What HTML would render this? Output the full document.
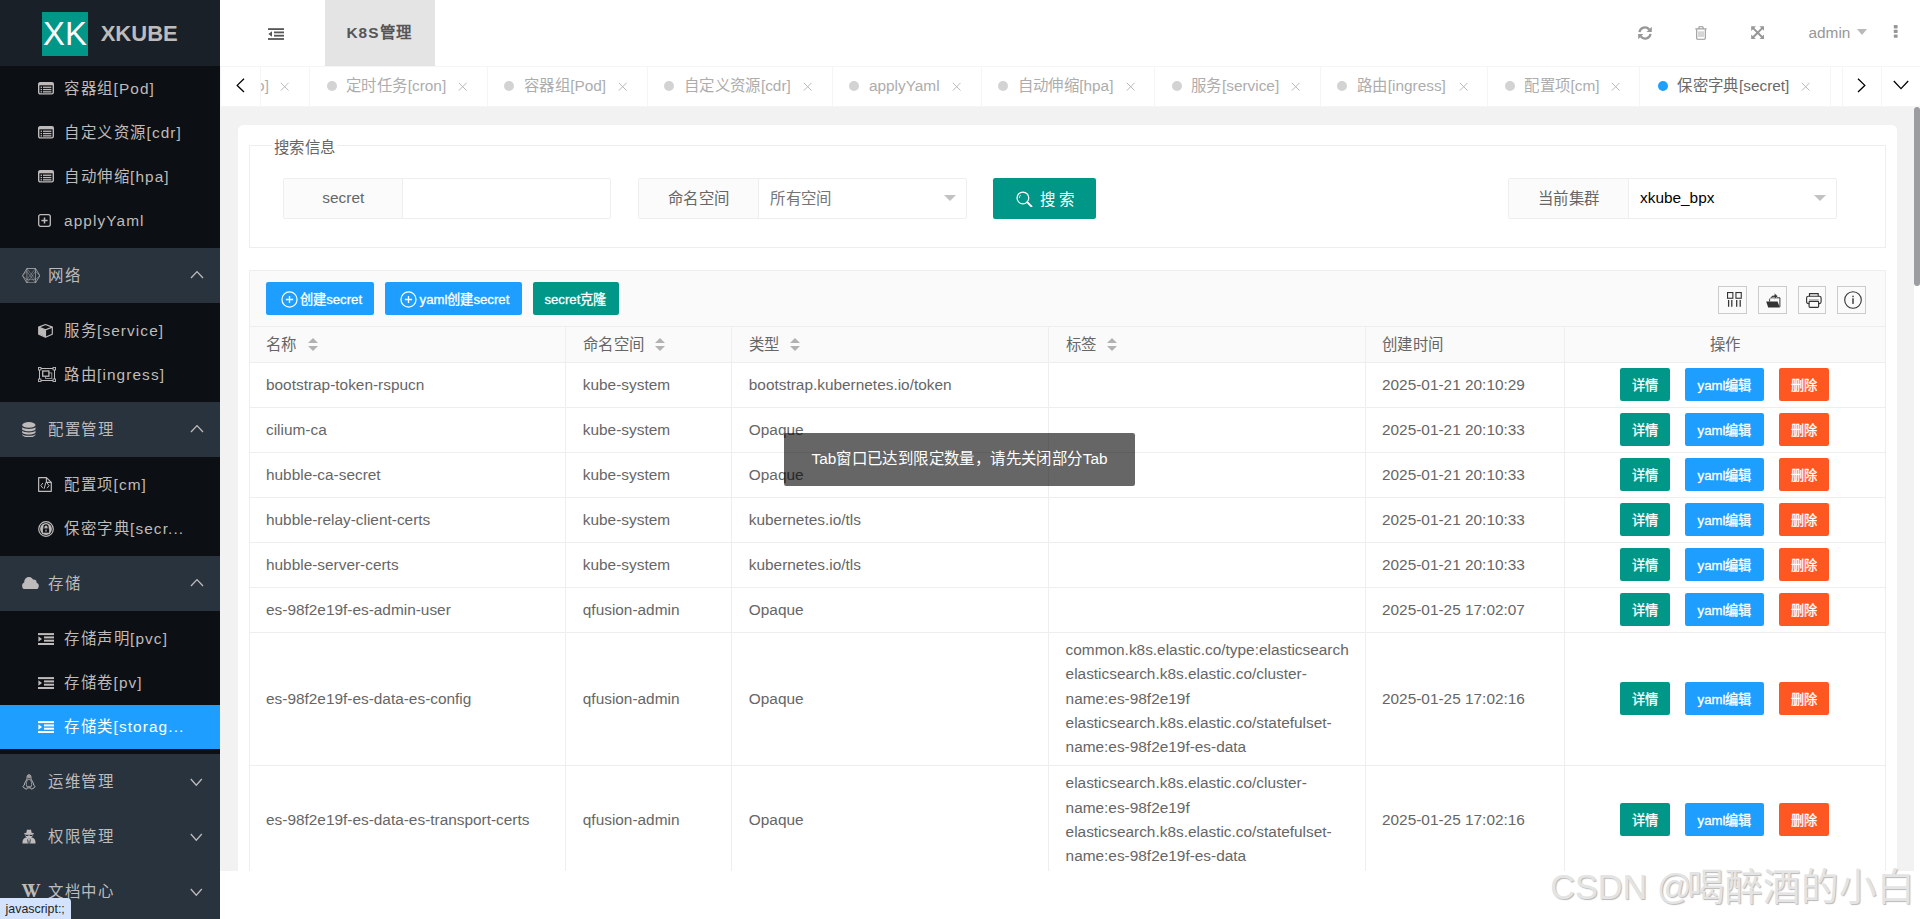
<!DOCTYPE html>
<html lang="zh-CN">
<head>
<meta charset="utf-8">
<title>XKUBE</title>
<style>
*{box-sizing:border-box;margin:0;padding:0}
html,body{width:1920px;height:919px;overflow:hidden;background:#fff}
body{position:relative;font-family:"Liberation Sans",sans-serif;font-size:15.4px;color:#666;line-height:1}
i{font-style:normal}
svg{display:block}
/* ---------- side ---------- */
#side{position:absolute;left:0;top:0;width:220px;height:919px;background:#28333E;overflow:hidden;color:rgb(191,187,187)}
#logo{position:absolute;left:0;top:0;width:220px;height:66px;background:#192027;z-index:3}
#logo .lg{position:absolute;left:42px;top:12px;width:46px;height:44px;background:#009688;color:#fff;font-size:32.8px;line-height:44px;overflow:hidden}
#logo .lg span{position:absolute;left:1px;top:0.3px;letter-spacing:0}
#logo h1{position:absolute;left:100.7px;top:0.6px;height:66px;line-height:66px;font-size:22px;font-weight:bold;color:rgb(191,187,187)}
.child{position:absolute;left:0;width:220px;background:#0c0f13}
.mi{position:absolute;left:0;width:220px;height:44px;line-height:44px;color:rgb(191,187,187)}
.mi i{position:absolute;top:0;height:44px;display:flex;align-items:center}
.mi>span{position:absolute;left:64px;top:0.8px;white-space:nowrap;letter-spacing:1.1px;font-size:15.4px}
.mi.on{background:#1E9FFF;color:#fff}
.gh{position:absolute;left:0;width:220px;height:55px;line-height:55px;color:rgb(191,187,187)}
.gh i{position:absolute;top:0;height:55px;display:flex;align-items:center}
.gh>span{position:absolute;left:48px;top:0;white-space:nowrap;letter-spacing:1.1px}
.gh .chev{position:absolute;left:190px;top:22px}
.wiki{font-family:"Liberation Serif",serif;font-weight:bold;font-size:18.4px;letter-spacing:-7.4px;position:relative;top:0.4px;left:-0.6px}
/* ---------- header ---------- */
#header{position:absolute;left:220px;top:0;width:1700px;height:66px;background:#fff}
#header .tg{position:absolute;left:48px;top:27.5px;color:#565656}
#header .k8s{position:absolute;left:105px;top:0;width:110px;height:66px;background:#e4e4e4;color:#565656;font-weight:bold;letter-spacing:1.1px;line-height:66px;text-align:center;white-space:nowrap;padding-right:1px}
#header .hi{position:absolute;color:#979797}
#header .admin{position:absolute;left:1588.5px;top:0;line-height:66px;color:#979797}
/* ---------- tabs ---------- */
#tabs{position:absolute;left:220px;top:66px;width:1700px;height:40.7px;background:#fff;border-top:1px solid #f5f5f5;border-bottom:1px solid #f5f5f5;overflow:hidden}
.tab{position:absolute;top:0;height:38.7px;line-height:38.5px;border-right:1px solid #f5f5f5;color:#adadad;white-space:nowrap;overflow:hidden}
.tab .dot{position:absolute;left:16.3px;top:14.4px;width:10px;height:10px;border-radius:50%;background:#d3d3d3}
.tab .tt{position:absolute;top:0}
.tab .tx{position:absolute;top:15.3px;color:#b9b9b9}
.tab.act{color:#696969}
.tab.act .dot{background:#1e9fff}
.ctl{position:absolute;top:0;height:38.7px;background:#fff;color:#000}
/* ---------- content ---------- */
#content{position:absolute;left:220px;top:106.7px;width:1700px;height:764px;background:#f2f2f2;overflow:hidden}
#sb{position:absolute;left:1694px;top:0;width:6px;height:764px;background:#fff}
#sb b{position:absolute;left:0;top:0.3px;width:6px;height:179.5px;border-radius:3px;background:#9c9da0}
#main{position:absolute;left:18px;top:18.3px;width:1659px;height:900px;background:#fff;border-radius:5.5px}
#fs{position:absolute;left:11.4px;top:20.2px;width:1636.4px;height:102.6px;border:1px solid #eee}
#fs legend,#lg{position:absolute;left:21.4px;top:-7.2px;height:18px;line-height:18px;background:#fff;padding:0 2.2px;width:65px;color:#666;white-space:nowrap}
.grp{position:absolute;top:53.2px;height:40.7px;border:1px solid #eee;border-radius:2px;background:#fff}
.grp .lb{position:absolute;left:0;top:0;height:38.7px;line-height:38.2px;background:#FBFBFB;border-right:1px solid #eee;text-align:center;color:#666;white-space:nowrap}
.grp .val{position:absolute;top:0;height:38.7px;line-height:38.2px;white-space:nowrap}
.grp .car{position:absolute;top:15.9px;width:0;height:0;border:6px solid transparent;border-top-color:#c2c2c2;border-bottom-width:0;border-top-width:6.4px}
#sbtn{position:absolute;left:755px;top:52.8px;width:103px;height:41.2px;background:#009688;border-radius:2.2px;color:#fff;line-height:41.2px;white-space:nowrap}
.cj{position:relative;top:0.7px}
.z{letter-spacing:.4px}
.mi .z,.gh .z{letter-spacing:1.5px}
#header .k8s .z{letter-spacing:1.5px}
/* table */
#tbl{position:absolute;left:11.4px;top:144.9px;width:1637px;height:800px;border:1px solid #eee}
#tool{position:absolute;left:11.4px;top:144.9px;width:1637px;height:57.3px;background:#FAFAFA;border:1px solid #eee}
.tbtn{position:absolute;top:157px;height:33px;border-radius:2.2px;color:#fff;font-size:13.2px;line-height:33px;white-space:nowrap}
.tbtn .ic{position:absolute;top:9.2px}
.tbtn .tx{position:absolute;top:0.9px;-webkit-text-stroke:0.3px #fff}
.tl{position:absolute;top:161px;width:29px;height:28px;border:1px solid #ccc;color:#333;background:#FAFAFA}
.tl svg{position:absolute}
#thead{position:absolute;left:0;top:201px;width:1659px;height:37px}
.th{position:absolute;top:0;height:37px;line-height:37px;background:#FAFAFA;border-bottom:1px solid #eee;border-right:1px solid #eee;border-top:1px solid #eee;padding-left:16px;white-space:nowrap;color:#666}
.th.ctr{text-align:center;padding-left:0}
.th .t{display:inline-block;vertical-align:top;line-height:35px}
.sort{display:inline-block;position:relative;width:10px;height:14px;margin-left:10.8px;vertical-align:top;top:11.5px}
.sort i{position:absolute;left:0;width:0;height:0;border:5px solid transparent}
.sort .u{top:-5.3px;border-bottom-color:#b2b2b2;border-bottom-width:5.5px}
.sort .d{top:7.3px;border-top-color:#b2b2b2;border-top-width:5.5px}
.tr{position:absolute;left:0;width:1659px}
.td{position:absolute;top:0;height:100%;border-bottom:1px solid #eee;border-right:1px solid #eee;padding-left:16px;display:flex;align-items:center;white-space:nowrap;color:#666}
.td .c{line-height:24.2px;position:relative;top:0.4px}
.td.last{padding-left:0}
.td.lab{padding-left:16.6px}
.td.lab .c{top:-0.4px}
.ops{position:absolute;left:0;top:5.5px;height:33px;width:100%}
.td.last{display:block}
.td.last .ops{top:50%;margin-top:-17px}
.b{position:absolute;top:0;height:33px;line-height:35.4px;-webkit-text-stroke:0.3px #fff;border-radius:2.2px;color:#fff;font-size:13.2px;text-align:center;white-space:nowrap}
.b.g{background:#009688}.b.bl{background:#1E9FFF}.b.r{background:#FF5722}
/* toast */
#toast{position:absolute;left:784px;top:433.3px;width:351px;height:52.4px;background:rgba(0,0,0,.6);border-radius:2.2px;color:#fff;line-height:52.4px;text-align:center;white-space:nowrap;z-index:10}
/* status + watermark */
#status{position:absolute;left:0;top:898px;width:71.3px;height:21px;background:#d3e3fd;border-top-right-radius:4px;color:#1f1f1f;font-size:12.4px;line-height:22.6px;padding-left:5.6px;z-index:20}
#wm{position:absolute;left:1550.2px;top:866.3px;font-size:34.3px;line-height:40px;color:#e4e4e4;white-space:nowrap;text-shadow:1px 1px 1px #b8b8b8,-0.5px -0.5px 0 #fff;z-index:15;letter-spacing:0}
</style>
</head>
<body>
<div id="side">
<div id="logo"><div class="lg"><span>XK</span></div><h1>XKUBE</h1></div>
<div class="child" style="top:66px;height:182px"></div>
<div class="mi " style="top:66.5px"><i style="left:38px"><svg width="16" height="13" viewBox="0 0 16 13" ><rect x="0.7" y="0.7" width="14.6" height="11.2" rx="1.6" fill="none" stroke="currentColor" stroke-width="1.4"/><rect x="0.7" y="0.7" width="14.6" height="2.6" fill="currentColor"/><rect x="2.6" y="4.6" width="1.4" height="1.3" fill="currentColor"/><rect x="5" y="4.6" width="8.4" height="1.3" fill="currentColor"/><rect x="2.6" y="6.9" width="1.4" height="1.3" fill="currentColor"/><rect x="5" y="6.9" width="8.4" height="1.3" fill="currentColor"/><rect x="2.6" y="9.2" width="1.4" height="1.3" fill="currentColor"/><rect x="5" y="9.2" width="8.4" height="1.3" fill="currentColor"/></svg></i><span><span class="z">容器组</span>[Pod]</span></div>
<div class="mi " style="top:110.5px"><i style="left:38px"><svg width="16" height="13" viewBox="0 0 16 13" ><rect x="0.7" y="0.7" width="14.6" height="11.2" rx="1.6" fill="none" stroke="currentColor" stroke-width="1.4"/><rect x="0.7" y="0.7" width="14.6" height="2.6" fill="currentColor"/><rect x="2.6" y="4.6" width="1.4" height="1.3" fill="currentColor"/><rect x="5" y="4.6" width="8.4" height="1.3" fill="currentColor"/><rect x="2.6" y="6.9" width="1.4" height="1.3" fill="currentColor"/><rect x="5" y="6.9" width="8.4" height="1.3" fill="currentColor"/><rect x="2.6" y="9.2" width="1.4" height="1.3" fill="currentColor"/><rect x="5" y="9.2" width="8.4" height="1.3" fill="currentColor"/></svg></i><span><span class="z">自定义资源</span>[cdr]</span></div>
<div class="mi " style="top:154.5px"><i style="left:38px"><svg width="16" height="13" viewBox="0 0 16 13" ><rect x="0.7" y="0.7" width="14.6" height="11.2" rx="1.6" fill="none" stroke="currentColor" stroke-width="1.4"/><rect x="0.7" y="0.7" width="14.6" height="2.6" fill="currentColor"/><rect x="2.6" y="4.6" width="1.4" height="1.3" fill="currentColor"/><rect x="5" y="4.6" width="8.4" height="1.3" fill="currentColor"/><rect x="2.6" y="6.9" width="1.4" height="1.3" fill="currentColor"/><rect x="5" y="6.9" width="8.4" height="1.3" fill="currentColor"/><rect x="2.6" y="9.2" width="1.4" height="1.3" fill="currentColor"/><rect x="5" y="9.2" width="8.4" height="1.3" fill="currentColor"/></svg></i><span><span class="z">自动伸缩</span>[hpa]</span></div>
<div class="mi " style="top:198.5px"><i style="left:38px"><svg width="13" height="13" viewBox="0 0 13 13" ><rect x="0.7" y="0.7" width="11.6" height="11.6" rx="2" fill="none" stroke="currentColor" stroke-width="1.3"/><path d="M3.4 6.5h6.2M6.5 3.4v6.2" stroke="currentColor" stroke-width="1.5"/></svg></i><span>applyYaml</span></div>
<div class="gh" style="top:248px"><i style="left:22px"><svg width="18.4" height="15.4" viewBox="0 0 18.4 15.4" style="position:relative;left:-0.4px;top:0.2px"><g fill="none" stroke="currentColor" stroke-width="0.75"><path d="M0.5 7.7 L4.9 0.5 H13.5 L17.9 7.7 L13.5 14.9 H4.9 Z"/><path d="M4.9 0.5 V14.9 M13.5 0.5 V14.9" stroke-width="0.6"/><path d="M4.9 0.5 L13.5 11.6 M13.5 0.5 L4.9 11.6 M4.9 14.9 L13.5 3.4 M13.5 14.9 L4.9 3.4 M4.9 11.6 H13.5 M0.5 7.7 L4.9 3.4 M0.5 7.7 L4.9 11.6 M17.9 7.7 L13.5 3.4 M17.9 7.7 L13.5 11.6" stroke-width="0.5" opacity="0.85"/></g></svg></i><span><span class="z">网络</span></span><svg class="chev" width="14" height="9" viewBox="0 0 14 9"><path d="M1 8 L7 1.6 L13 8" fill="none" stroke="currentColor" stroke-width="1.3"/></svg></div>
<div class="child" style="top:303px;height:99px"></div>
<div class="mi " style="top:308.5px"><i style="left:38px"><svg width="15" height="15" viewBox="0 0 15 15" ><path d="M7.5 1.5 L14.3 4.1 V11.2 L7.5 14.2 L0.7 11.2 V4.1 Z" fill="none" stroke="currentColor" stroke-width="1.2" stroke-linejoin="round"/><path d="M0.7 4.1 L7.5 6.8 L14.3 4.1 M7.5 6.8 V14.2" fill="none" stroke="currentColor" stroke-width="1.2"/><path d="M0.9 4.4 L7.4 7 V14 L0.9 11.1 Z" fill="currentColor"/></svg></i><span><span class="z">服务</span>[service]</span></div>
<div class="mi " style="top:352.5px"><i style="left:38px"><svg width="18" height="15" viewBox="0 0 18 15" ><path d="M1.5 3 V12 M16.5 3 V12 M3 1.5 H15 M3 13.5 H15" stroke="currentColor" stroke-width="1"/><rect x="0.45" y="0.45" width="2.5" height="2.5" fill="none" stroke="currentColor" stroke-width="0.9"/><rect x="15.05" y="0.45" width="2.5" height="2.5" fill="none" stroke="currentColor" stroke-width="0.9"/><rect x="0.45" y="12.05" width="2.5" height="2.5" fill="none" stroke="currentColor" stroke-width="0.9"/><rect x="15.05" y="12.05" width="2.5" height="2.5" fill="none" stroke="currentColor" stroke-width="0.9"/><rect x="7.6" y="5.9" width="6.2" height="5.6" fill="none" stroke="currentColor" stroke-width="0.9" opacity="0.85"/><rect x="4.7" y="4" width="6.2" height="5.2" fill="#0c0f13" stroke="currentColor" stroke-width="1.3"/></svg></i><span><span class="z">路由</span>[ingress]</span></div>
<div class="gh" style="top:402px"><i style="left:22px"><svg width="13.7" height="15.7" viewBox="0 0 14 16"><ellipse cx="7" cy="3" rx="6.8" ry="2.9" fill="currentColor"/><path d="M0.2 5.4 C2 7.6 12 7.6 13.8 5.4 V7.6 C12 10 2 10 0.2 7.6 Z" fill="currentColor"/><path d="M0.2 9 C2 11.2 12 11.2 13.8 9 V11 C12 13.4 2 13.4 0.2 11 Z" fill="currentColor"/><path d="M0.2 12.5 C2 14.7 12 14.7 13.8 12.5 V13.4 C12 16.6 2 16.6 0.2 13.4 Z" fill="currentColor"/></svg></i><span><span class="z">配置管理</span></span><svg class="chev" width="14" height="9" viewBox="0 0 14 9"><path d="M1 8 L7 1.6 L13 8" fill="none" stroke="currentColor" stroke-width="1.3"/></svg></div>
<div class="child" style="top:457px;height:99px"></div>
<div class="mi " style="top:462.5px"><i style="left:38px"><svg width="14" height="15" viewBox="0 0 14 15" ><path d="M0.65 0.65 H8.4 L13.3 5.4 V14.35 H0.65 Z" fill="none" stroke="currentColor" stroke-width="1.2" stroke-linejoin="round"/><path d="M8.4 0.7 V5.4 H13.2" fill="none" stroke="currentColor" stroke-width="1.1"/><path d="M4.9 6 L2.9 8.6 L4.9 11.2 M9.1 6 L11.1 8.6 L9.1 11.2 M7.9 5.4 L6.1 11.8" fill="none" stroke="currentColor" stroke-width="1"/></svg></i><span><span class="z">配置项</span>[cm]</span></div>
<div class="mi " style="top:506.5px"><i style="left:38px"><svg width="16" height="16" viewBox="0 0 16 16" ><circle cx="8" cy="8" r="7.3" fill="none" stroke="currentColor" stroke-width="1.2"/><circle cx="8" cy="8" r="5.9" fill="currentColor"/><path d="M5.9 7.4 V6 A2.1 2.1 0 0 1 10.1 6 V7.4" fill="none" stroke="#0c0f13" stroke-width="1.1"/><rect x="4.9" y="7.4" width="6.2" height="4.3" fill="#0c0f13"/><rect x="7.4" y="8.6" width="1.2" height="2" fill="currentColor"/></svg></i><span><span class="z">保密字典</span>[secr...</span></div>
<div class="gh" style="top:556px"><i style="left:22px"><svg width="17" height="12.5" viewBox="0 0 17 12.5" style="position:relative;top:-0.5px;left:-0.4px"><g fill="currentColor"><circle cx="3.7" cy="8.8" r="3.6"/><circle cx="6.9" cy="4.8" r="4.7"/><circle cx="11.7" cy="5.5" r="2.9"/><circle cx="13.5" cy="9.1" r="3.3"/><rect x="3.7" y="6" width="9.8" height="6.4"/></g></svg></i><span><span class="z">存储</span></span><svg class="chev" width="14" height="9" viewBox="0 0 14 9"><path d="M1 8 L7 1.6 L13 8" fill="none" stroke="currentColor" stroke-width="1.3"/></svg></div>
<div class="child" style="top:611px;height:143px"></div>
<div class="mi " style="top:616.5px"><i style="left:38px"><svg width="16" height="12" viewBox="0 0 16 12" ><rect x="0" y="0.1" width="16" height="2" fill="currentColor"/><rect x="6" y="3.4" width="10" height="2" fill="currentColor"/><rect x="6" y="6.7" width="10" height="2" fill="currentColor"/><rect x="0" y="10" width="16" height="2" fill="currentColor"/><path d="M0.4 3.2 L4 6 L0.4 8.8 Z" fill="currentColor"/></svg></i><span><span class="z">存储声明</span>[pvc]</span></div>
<div class="mi " style="top:660.5px"><i style="left:38px"><svg width="16" height="12" viewBox="0 0 16 12" ><rect x="0" y="0.1" width="16" height="2" fill="currentColor"/><rect x="6" y="3.4" width="10" height="2" fill="currentColor"/><rect x="6" y="6.7" width="10" height="2" fill="currentColor"/><rect x="0" y="10" width="16" height="2" fill="currentColor"/><path d="M0.4 3.2 L4 6 L0.4 8.8 Z" fill="currentColor"/></svg></i><span><span class="z">存储卷</span>[pv]</span></div>
<div class="mi on" style="top:704.5px"><i style="left:38px"><svg width="16" height="12" viewBox="0 0 16 12" ><rect x="0" y="0.1" width="16" height="2" fill="currentColor"/><rect x="6" y="3.4" width="10" height="2" fill="currentColor"/><rect x="6" y="6.7" width="10" height="2" fill="currentColor"/><rect x="0" y="10" width="16" height="2" fill="currentColor"/><path d="M0.4 3.2 L4 6 L0.4 8.8 Z" fill="currentColor"/></svg></i><span><span class="z">存储类</span>[storag...</span></div>
<div class="gh" style="top:754px"><i style="left:22px"><svg width="14" height="16" viewBox="0 0 14 16" ><path d="M7 0.7 C5.2 0.7 4.9 2.6 5.1 4.2 C4.9 6 2.6 8.2 2.2 11.2 C1.2 11.6 0.6 12.8 1.4 13.4 L3.8 14.9 C4.8 15.4 5.4 14.6 5.2 13.8 H8.8 C8.6 14.6 9.2 15.4 10.2 14.9 L12.6 13.4 C13.4 12.8 12.8 11.6 11.8 11.2 C11.4 8.2 9.1 6 8.9 4.2 C9.1 2.6 8.8 0.7 7 0.7 Z" fill="none" stroke="currentColor" stroke-width="1"/><path d="M5.6 5.6 C4.6 7.6 4 9.6 4.6 12.4 H9.4 C10 9.6 9.4 7.6 8.4 5.6 Z" fill="none" stroke="currentColor" stroke-width="0.7"/><ellipse cx="7" cy="2.8" rx="1.5" ry="1.7" fill="currentColor" opacity="0.75"/></svg></i><span><span class="z">运维管理</span></span><svg class="chev" style="top:23.6px" width="13" height="9" viewBox="0 0 13 9"><path d="M0.8 1 L6.3 7.2 L11.8 1" fill="none" stroke="currentColor" stroke-width="1.3"/></svg></div>
<div class="gh" style="top:809px"><i style="left:22px"><svg width="14" height="15" viewBox="0 0 14 15" ><path d="M4.6 3.4 C4.4 1.2 5.2 0.3 5.9 0.6 C6.6 1 7.4 1 8.1 0.6 C8.8 0.3 9.6 1.2 9.4 3.4 L12 4.6 V5.2 H2 V4.6 Z" fill="currentColor"/><path d="M3.4 5.2 H10.6 C10.8 7.8 9.6 9.4 7 9.4 C4.4 9.4 3.2 7.8 3.4 5.2 Z" fill="currentColor"/><path d="M0.5 14.6 C0.2 11 1.4 9 4 8.4 L7 9.6 L10 8.4 C12.6 9 13.8 11 13.5 14.6 Z" fill="currentColor"/><path d="M4 6 H6.4 V7 H4 Z M7.6 6 H10 V7 H7.6 Z" fill="#28333E"/><path d="M5.6 10.4 L6.4 14.6 M8.4 10.4 L7.6 14.6" stroke="#28333E" stroke-width="0.9"/></svg></i><span><span class="z">权限管理</span></span><svg class="chev" style="top:23.6px" width="13" height="9" viewBox="0 0 13 9"><path d="M0.8 1 L6.3 7.2 L11.8 1" fill="none" stroke="currentColor" stroke-width="1.3"/></svg></div>
<div class="gh" style="top:864px"><i style="left:22px"><b class="wiki">VV</b></i><span><span class="z">文档中心</span></span><svg class="chev" style="top:23.6px" width="13" height="9" viewBox="0 0 13 9"><path d="M0.8 1 L6.3 7.2 L11.8 1" fill="none" stroke="currentColor" stroke-width="1.3"/></svg></div>
</div>

<div id="header">
  <div class="tg"><svg width="16" height="12" viewBox="0 0 16 12" ><rect x="0" y="0.2" width="16" height="1.8" fill="currentColor"/><rect x="6" y="3.5" width="10" height="1.8" fill="currentColor"/><rect x="6" y="6.8" width="10" height="1.8" fill="currentColor"/><rect x="0" y="10.1" width="16" height="1.8" fill="currentColor"/><path d="M4 3.3 L0.4 6 L4 8.7 Z" fill="currentColor"/></svg></div>
  <div class="k8s">K8S<span class="z">管理</span></div>
  <div class="hi" style="left:1417.7px;top:25.8px"><svg width="14" height="14" viewBox="0 0 14 14"><path d="M1.5 6.2 A5.5 5.5 0 0 1 11.2 3.5" fill="none" stroke="currentColor" stroke-width="2.3"/><path d="M12.5 7.8 A5.5 5.5 0 0 1 2.8 10.5" fill="none" stroke="currentColor" stroke-width="2.3"/><path d="M13.8 0.7 V5.9 H8.6 Z" fill="currentColor"/><path d="M0.2 13.3 V8.1 H5.4 Z" fill="currentColor"/></svg></div>
  <div class="hi" style="left:1475px;top:25.8px"><svg width="12" height="14" viewBox="0 0 12 14"><path d="M0.3 2.9 H11.7" fill="none" stroke="currentColor" stroke-width="1.1"/><path d="M3.6 2.8 L4.2 0.8 H7.8 L8.4 2.8" fill="none" stroke="currentColor" stroke-width="1.1"/><path d="M1.7 3.2 V12.3 Q1.7 13.3 2.7 13.3 H9.3 Q10.3 13.3 10.3 12.3 V3.2" fill="none" stroke="currentColor" stroke-width="1.1"/><path d="M4 5.3 V11 M6 5.3 V11 M8 5.3 V11" stroke="currentColor" stroke-width="0.8"/></svg></div>
  <div class="hi" style="left:1530.9px;top:25.9px"><svg width="13.4" height="13.4" viewBox="0 0 14 14"><path d="M2.2 2.2 L11.8 11.8 M11.8 2.2 L2.2 11.8" stroke="currentColor" stroke-width="2.1"/><path d="M0.2 0.2 H5.2 L0.2 5.2 Z M13.8 0.2 V5.2 L8.8 0.2 Z M0.2 13.8 V8.8 L5.2 13.8 Z M13.8 13.8 H8.8 L13.8 8.8 Z" fill="currentColor"/></svg></div>
  <div class="admin">admin</div>
  <div class="hi" style="left:1636.9px;top:29.3px;width:0;height:0;border:5.8px solid transparent;border-top:6.6px solid #b9b9b9;border-bottom-width:0"></div>
  <div class="hi" style="left:1673.4px;top:25.4px"><svg width="6" height="13" viewBox="0 0 6 13"><rect x="0.8" y="0" width="3.8" height="3.4" rx="0.6" fill="currentColor"/><rect x="0.8" y="4.7" width="3.8" height="3.4" rx="0.6" fill="currentColor"/><rect x="0.8" y="9.4" width="3.8" height="3.4" rx="0.6" fill="currentColor"/></svg></div>
</div>

<div id="tabs">
<div class="tab" style="left:41px;width:49.3px"><span class="tt" style="left:-4.9px">o]</span><span class="tx" style="left:19.4px;top:15.2px"><svg class="x" width="9.4" height="9.4" viewBox="0 0 9.4 9.4"><path d="M0.8 0.8 L8.6 8.6 M8.6 0.8 L0.8 8.6" stroke="currentColor" stroke-width="1" fill="none"/></svg></span></div>
<div class="tab" style="left:90.3px;width:177.9px"><span class="dot"></span><span class="tt" style="left:35.8px"><span class="z">定时任务</span>[cron]</span><span class="tx" style="right:19.4px"><svg class="x" width="9.4" height="9.4" viewBox="0 0 9.4 9.4"><path d="M0.8 0.8 L8.6 8.6 M8.6 0.8 L0.8 8.6" stroke="currentColor" stroke-width="1" fill="none"/></svg></span></div>
<div class="tab" style="left:268.2px;width:159.9px"><span class="dot"></span><span class="tt" style="left:35.8px"><span class="z">容器组</span>[Pod]</span><span class="tx" style="right:19.4px"><svg class="x" width="9.4" height="9.4" viewBox="0 0 9.4 9.4"><path d="M0.8 0.8 L8.6 8.6 M8.6 0.8 L0.8 8.6" stroke="currentColor" stroke-width="1" fill="none"/></svg></span></div>
<div class="tab" style="left:428.1px;width:185.0px"><span class="dot"></span><span class="tt" style="left:35.8px"><span class="z">自定义资源</span>[cdr]</span><span class="tx" style="right:19.4px"><svg class="x" width="9.4" height="9.4" viewBox="0 0 9.4 9.4"><path d="M0.8 0.8 L8.6 8.6 M8.6 0.8 L0.8 8.6" stroke="currentColor" stroke-width="1" fill="none"/></svg></span></div>
<div class="tab" style="left:613.1px;width:148.7px"><span class="dot"></span><span class="tt" style="left:35.8px">applyYaml</span><span class="tx" style="right:19.4px"><svg class="x" width="9.4" height="9.4" viewBox="0 0 9.4 9.4"><path d="M0.8 0.8 L8.6 8.6 M8.6 0.8 L0.8 8.6" stroke="currentColor" stroke-width="1" fill="none"/></svg></span></div>
<div class="tab" style="left:761.8px;width:173.5px"><span class="dot"></span><span class="tt" style="left:35.8px"><span class="z">自动伸缩</span>[hpa]</span><span class="tx" style="right:19.4px"><svg class="x" width="9.4" height="9.4" viewBox="0 0 9.4 9.4"><path d="M0.8 0.8 L8.6 8.6 M8.6 0.8 L0.8 8.6" stroke="currentColor" stroke-width="1" fill="none"/></svg></span></div>
<div class="tab" style="left:935.3px;width:165.8px"><span class="dot"></span><span class="tt" style="left:35.8px"><span class="z">服务</span>[service]</span><span class="tx" style="right:19.4px"><svg class="x" width="9.4" height="9.4" viewBox="0 0 9.4 9.4"><path d="M0.8 0.8 L8.6 8.6 M8.6 0.8 L0.8 8.6" stroke="currentColor" stroke-width="1" fill="none"/></svg></span></div>
<div class="tab" style="left:1101.1px;width:167.4px"><span class="dot"></span><span class="tt" style="left:35.8px"><span class="z">路由</span>[ingress]</span><span class="tx" style="right:19.4px"><svg class="x" width="9.4" height="9.4" viewBox="0 0 9.4 9.4"><path d="M0.8 0.8 L8.6 8.6 M8.6 0.8 L0.8 8.6" stroke="currentColor" stroke-width="1" fill="none"/></svg></span></div>
<div class="tab" style="left:1268.5px;width:151.9px"><span class="dot"></span><span class="tt" style="left:35.8px"><span class="z">配置项</span>[cm]</span><span class="tx" style="right:19.4px"><svg class="x" width="9.4" height="9.4" viewBox="0 0 9.4 9.4"><path d="M0.8 0.8 L8.6 8.6 M8.6 0.8 L0.8 8.6" stroke="currentColor" stroke-width="1" fill="none"/></svg></span></div>
<div class="tab act" style="left:1421.5px;width:189.2px"><span class="dot"></span><span class="tt" style="left:35.8px"><span class="z">保密字典</span>[secret]</span><span class="tx" style="right:19.3px"><svg class="x" width="9.4" height="9.4" viewBox="0 0 9.4 9.4"><path d="M0.8 0.8 L8.6 8.6 M8.6 0.8 L0.8 8.6" stroke="currentColor" stroke-width="1" fill="none"/></svg></span></div>
<div class="tab" style="left:1611px;width:30px"></div>
  <div class="ctl" style="left:0;width:41px;border-left:1px solid #f5f5f5;border-right:1px solid #f5f5f5"><svg style="position:absolute;left:14.9px;top:10.7px" width="9" height="15" viewBox="0 0 9 15"><path d="M8 0.8 L1.2 7.4 L8 14" fill="none" stroke="#000" stroke-width="1.3"/></svg></div>
  <div class="ctl" style="left:1622.2px;width:39.8px;border-left:1px solid #f5f5f5"><svg style="position:absolute;left:14.2px;top:10.8px" width="9" height="15" viewBox="0 0 9 15"><path d="M1 0.8 L7.8 7.4 L1 14" fill="none" stroke="#000" stroke-width="1.3"/></svg></div>
  <div class="ctl" style="left:1661.2px;width:38.8px;border-left:1px solid #f5f5f5"><svg style="position:absolute;left:10.6px;top:12.7px" width="16" height="10" viewBox="0 0 16 10"><path d="M0.8 1 L8 8.6 L15.2 1" fill="none" stroke="#000" stroke-width="1.3"/></svg></div>
</div>

<div id="content">
  <div id="main">
    <div id="fs"><div id="lg"><span class="z">搜索信息</span></div></div>
    <div class="grp" style="left:45.2px;width:327.6px"><div class="lb" style="width:119.2px">secret</div></div>
    <div class="grp" style="left:400.2px;width:328.6px"><div class="lb" style="width:120px"><span class="cj"><span class="z">命名空间</span></span></div><div class="val" style="left:131px;color:#757575"><span class="cj"><span class="z">所有空间</span></span></div><div class="car" style="left:304.8px"></div></div>
    <div id="sbtn"><svg style="position:absolute;left:23.3px;top:12.9px" width="16.8" height="16.8" viewBox="0 0 18 18"><circle cx="7.4" cy="7.4" r="6.3" fill="none" stroke="#fff" stroke-width="1.3"/><path d="M12 12 L16.6 16.6" stroke="#fff" stroke-width="2" stroke-linecap="round"/><path d="M3.6 7.4 A3.8 3.8 0 0 1 5 4.4" fill="none" stroke="#fff" stroke-width="0.9"/></svg><span style="position:absolute;left:46.6px;top:1.2px">搜 索</span></div>
    <div class="grp" style="left:1270.2px;width:328.6px"><div class="lb" style="width:120px"><span class="cj"><span class="z">当前集群</span></span></div><div class="val" style="left:130.8px;color:#000">xkube_bpx</div><div class="car" style="left:304.9px"></div></div>

    <div id="tbl"></div>
    <div id="tool"></div>
    <div class="tbtn" style="left:28px;width:108px;background:#1E9FFF"><svg class="ic" style="left:14.8px" width="17" height="17" viewBox="0 0 17 17"><circle cx="8.5" cy="8.5" r="7.55" fill="none" stroke="#fff" stroke-width="1.25"/><path d="M4.9 8.5 H12.1 M8.5 4.9 V12.1" stroke="#fff" stroke-width="1.3"/></svg><span class="tx" style="left:34.2px">创建secret</span></div>
    <div class="tbtn" style="left:147px;width:137px;background:#1E9FFF"><svg class="ic" style="left:15.1px" width="17" height="17" viewBox="0 0 17 17"><circle cx="8.5" cy="8.5" r="7.55" fill="none" stroke="#fff" stroke-width="1.25"/><path d="M4.9 8.5 H12.1 M8.5 4.9 V12.1" stroke="#fff" stroke-width="1.3"/></svg><span class="tx" style="left:34.6px">yaml创建secret</span></div>
    <div class="tbtn" style="left:295px;width:86px;background:#009688"><span class="tx" style="left:11.4px">secret克隆</span></div>

    <div class="tl" style="left:1480px;width:29px"><svg style="left:8.1px;top:5.2px" width="15" height="15" viewBox="0 0 15 15"><rect x="0.55" y="0.55" width="5.3" height="5.7" fill="none" stroke="currentColor" stroke-width="1.1"/><rect x="8.95" y="0.55" width="5.3" height="5.7" fill="none" stroke="currentColor" stroke-width="1.1"/><path d="M1.6 8 V14.8 M4.8 8 V14.8 M9.7 8 V14.8 M13.2 8 V14.8" stroke="currentColor" stroke-width="1.25"/></svg></div>
    <div class="tl" style="left:1520px;width:29px"><svg style="left:7px;top:5.4px" width="15" height="16" viewBox="0 0 15 16"><path d="M0.2 9.6 H11.6 L13.8 15.4 H2.2 Z" fill="currentColor"/><path d="M3.6 9.4 V7.2 L4.8 5.8 H13.9 V15" fill="none" stroke="currentColor" stroke-width="1"/><path d="M4.4 7.4 C4.4 4.6 6 3.2 8.4 3.2 V1 L11.8 4.2 L8.4 7.4 V5.2 C6.8 5.2 5.6 5.8 4.4 7.4 Z" fill="currentColor" stroke="#FAFAFA" stroke-width="0.5"/></svg></div>
    <div class="tl" style="left:1560px;width:28px"><svg style="left:6.5px;top:5.9px" width="16" height="15" viewBox="0 0 16 15"><path d="M3.5 3.2 V0.6 H12.2 V3.2" fill="none" stroke="currentColor" stroke-width="1.15"/><rect x="0.6" y="3.2" width="14.5" height="7.4" rx="1.8" fill="none" stroke="currentColor" stroke-width="1.15"/><rect x="3.1" y="8.4" width="9.5" height="6" rx="0.9" fill="#FAFAFA" stroke="currentColor" stroke-width="1.15"/><path d="M3 6.9 H12.8" stroke="#888" stroke-width="0.9"/></svg></div>
    <div class="tl" style="left:1599px;width:29px"><svg style="left:5.8px;top:4.2px" width="18" height="18" viewBox="0 0 18 18"><circle cx="9" cy="9" r="8.3" fill="none" stroke="currentColor" stroke-width="1.1"/><rect x="8.3" y="7.3" width="1.4" height="5.6" fill="currentColor"/><rect x="8.3" y="4.7" width="1.4" height="1.5" fill="currentColor"/></svg></div>

    <div id="thead">
<div class="th" style="left:12.0px;width:316.0px;padding-left:16px"><span class="t"><span class="z">名称</span></span><span class="sort"><i class="u"></i><i class="d"></i></span></div>
<div class="th" style="left:328.0px;width:166.0px;padding-left:16.8px"><span class="t"><span class="z">命名空间</span></span><span class="sort"><i class="u"></i><i class="d"></i></span></div>
<div class="th" style="left:494.0px;width:317.0px;padding-left:16.8px"><span class="t"><span class="z">类型</span></span><span class="sort"><i class="u"></i><i class="d"></i></span></div>
<div class="th" style="left:811.0px;width:317.0px;padding-left:16.6px"><span class="t"><span class="z">标签</span></span><span class="sort"><i class="u"></i><i class="d"></i></span></div>
<div class="th" style="left:1128.0px;width:199.0px;padding-left:16px"><span class="t"><span class="z">创建时间</span></span></div>
<div class="th last ctr" style="left:1327.0px;width:321.0px"><span class="t"><span class="z">操作</span></span></div>
    </div>
<div class="tr" style="top:237.5px;height:45.1px">
<div class="td" style="left:12.0px;width:316.0px;padding-left:16px"><div class="c">bootstrap-token-rspucn</div></div>
<div class="td" style="left:328.0px;width:166.0px;padding-left:16.8px"><div class="c">kube-system</div></div>
<div class="td" style="left:494.0px;width:317.0px;padding-left:16.8px"><div class="c">bootstrap.kubernetes.io/token</div></div>
<div class="td lab" style="left:811.0px;width:317.0px;padding-left:16.6px"><div class="c"></div></div>
<div class="td" style="left:1128.0px;width:199.0px;padding-left:16px"><div class="c">2025-01-21 20:10:29</div></div>
<div class="td last" style="left:1327.0px;width:321.0px"><div class="ops"><a class="b g" style="left:55.0px;width:50px">详情</a><a class="b bl" style="left:120.0px;width:79px">yaml编辑</a><a class="b r" style="left:214.0px;width:50px">删除</a></div></div>
</div>
<div class="tr" style="top:282.6px;height:45.1px">
<div class="td" style="left:12.0px;width:316.0px;padding-left:16px"><div class="c">cilium-ca</div></div>
<div class="td" style="left:328.0px;width:166.0px;padding-left:16.8px"><div class="c">kube-system</div></div>
<div class="td" style="left:494.0px;width:317.0px;padding-left:16.8px"><div class="c">Opaque</div></div>
<div class="td lab" style="left:811.0px;width:317.0px;padding-left:16.6px"><div class="c"></div></div>
<div class="td" style="left:1128.0px;width:199.0px;padding-left:16px"><div class="c">2025-01-21 20:10:33</div></div>
<div class="td last" style="left:1327.0px;width:321.0px"><div class="ops"><a class="b g" style="left:55.0px;width:50px">详情</a><a class="b bl" style="left:120.0px;width:79px">yaml编辑</a><a class="b r" style="left:214.0px;width:50px">删除</a></div></div>
</div>
<div class="tr" style="top:327.7px;height:45.1px">
<div class="td" style="left:12.0px;width:316.0px;padding-left:16px"><div class="c">hubble-ca-secret</div></div>
<div class="td" style="left:328.0px;width:166.0px;padding-left:16.8px"><div class="c">kube-system</div></div>
<div class="td" style="left:494.0px;width:317.0px;padding-left:16.8px"><div class="c">Opaque</div></div>
<div class="td lab" style="left:811.0px;width:317.0px;padding-left:16.6px"><div class="c"></div></div>
<div class="td" style="left:1128.0px;width:199.0px;padding-left:16px"><div class="c">2025-01-21 20:10:33</div></div>
<div class="td last" style="left:1327.0px;width:321.0px"><div class="ops"><a class="b g" style="left:55.0px;width:50px">详情</a><a class="b bl" style="left:120.0px;width:79px">yaml编辑</a><a class="b r" style="left:214.0px;width:50px">删除</a></div></div>
</div>
<div class="tr" style="top:372.8px;height:45.1px">
<div class="td" style="left:12.0px;width:316.0px;padding-left:16px"><div class="c">hubble-relay-client-certs</div></div>
<div class="td" style="left:328.0px;width:166.0px;padding-left:16.8px"><div class="c">kube-system</div></div>
<div class="td" style="left:494.0px;width:317.0px;padding-left:16.8px"><div class="c">kubernetes.io/tls</div></div>
<div class="td lab" style="left:811.0px;width:317.0px;padding-left:16.6px"><div class="c"></div></div>
<div class="td" style="left:1128.0px;width:199.0px;padding-left:16px"><div class="c">2025-01-21 20:10:33</div></div>
<div class="td last" style="left:1327.0px;width:321.0px"><div class="ops"><a class="b g" style="left:55.0px;width:50px">详情</a><a class="b bl" style="left:120.0px;width:79px">yaml编辑</a><a class="b r" style="left:214.0px;width:50px">删除</a></div></div>
</div>
<div class="tr" style="top:417.9px;height:45.1px">
<div class="td" style="left:12.0px;width:316.0px;padding-left:16px"><div class="c">hubble-server-certs</div></div>
<div class="td" style="left:328.0px;width:166.0px;padding-left:16.8px"><div class="c">kube-system</div></div>
<div class="td" style="left:494.0px;width:317.0px;padding-left:16.8px"><div class="c">kubernetes.io/tls</div></div>
<div class="td lab" style="left:811.0px;width:317.0px;padding-left:16.6px"><div class="c"></div></div>
<div class="td" style="left:1128.0px;width:199.0px;padding-left:16px"><div class="c">2025-01-21 20:10:33</div></div>
<div class="td last" style="left:1327.0px;width:321.0px"><div class="ops"><a class="b g" style="left:55.0px;width:50px">详情</a><a class="b bl" style="left:120.0px;width:79px">yaml编辑</a><a class="b r" style="left:214.0px;width:50px">删除</a></div></div>
</div>
<div class="tr" style="top:463.0px;height:45.1px">
<div class="td" style="left:12.0px;width:316.0px;padding-left:16px"><div class="c">es-98f2e19f-es-admin-user</div></div>
<div class="td" style="left:328.0px;width:166.0px;padding-left:16.8px"><div class="c">qfusion-admin</div></div>
<div class="td" style="left:494.0px;width:317.0px;padding-left:16.8px"><div class="c">Opaque</div></div>
<div class="td lab" style="left:811.0px;width:317.0px;padding-left:16.6px"><div class="c"></div></div>
<div class="td" style="left:1128.0px;width:199.0px;padding-left:16px"><div class="c">2025-01-25 17:02:07</div></div>
<div class="td last" style="left:1327.0px;width:321.0px"><div class="ops"><a class="b g" style="left:55.0px;width:50px">详情</a><a class="b bl" style="left:120.0px;width:79px">yaml编辑</a><a class="b r" style="left:214.0px;width:50px">删除</a></div></div>
</div>
<div class="tr" style="top:508.1px;height:133.1px">
<div class="td" style="left:12.0px;width:316.0px;padding-left:16px"><div class="c">es-98f2e19f-es-data-es-config</div></div>
<div class="td" style="left:328.0px;width:166.0px;padding-left:16.8px"><div class="c">qfusion-admin</div></div>
<div class="td" style="left:494.0px;width:317.0px;padding-left:16.8px"><div class="c">Opaque</div></div>
<div class="td lab" style="left:811.0px;width:317.0px;padding-left:16.6px"><div class="c">common.k8s.elastic.co/type:elasticsearch<br>elasticsearch.k8s.elastic.co/cluster-<br>name:es-98f2e19f<br>elasticsearch.k8s.elastic.co/statefulset-<br>name:es-98f2e19f-es-data</div></div>
<div class="td" style="left:1128.0px;width:199.0px;padding-left:16px"><div class="c">2025-01-25 17:02:16</div></div>
<div class="td last" style="left:1327.0px;width:321.0px"><div class="ops"><a class="b g" style="left:55.0px;width:50px">详情</a><a class="b bl" style="left:120.0px;width:79px">yaml编辑</a><a class="b r" style="left:214.0px;width:50px">删除</a></div></div>
</div>
<div class="tr" style="top:641.2px;height:108.9px">
<div class="td" style="left:12.0px;width:316.0px;padding-left:16px"><div class="c">es-98f2e19f-es-data-es-transport-certs</div></div>
<div class="td" style="left:328.0px;width:166.0px;padding-left:16.8px"><div class="c">qfusion-admin</div></div>
<div class="td" style="left:494.0px;width:317.0px;padding-left:16.8px"><div class="c">Opaque</div></div>
<div class="td lab" style="left:811.0px;width:317.0px;padding-left:16.6px"><div class="c">elasticsearch.k8s.elastic.co/cluster-<br>name:es-98f2e19f<br>elasticsearch.k8s.elastic.co/statefulset-<br>name:es-98f2e19f-es-data</div></div>
<div class="td" style="left:1128.0px;width:199.0px;padding-left:16px"><div class="c">2025-01-25 17:02:16</div></div>
<div class="td last" style="left:1327.0px;width:321.0px"><div class="ops"><a class="b g" style="left:55.0px;width:50px">详情</a><a class="b bl" style="left:120.0px;width:79px">yaml编辑</a><a class="b r" style="left:214.0px;width:50px">删除</a></div></div>
</div>
  </div>
  <div id="sb"><b></b></div>
</div>

<div id="toast">Tab<span class="z">窗口已达到限定数量，请先关闭部分</span>Tab</div>
<div id="wm">CSDN @<span style="font-size:37.6px;margin-left:-4.4px;letter-spacing:0px;position:relative;top:0.6px">喝醉酒的小白</span></div>
<div id="status">javascript:;</div>
</body>
</html>
